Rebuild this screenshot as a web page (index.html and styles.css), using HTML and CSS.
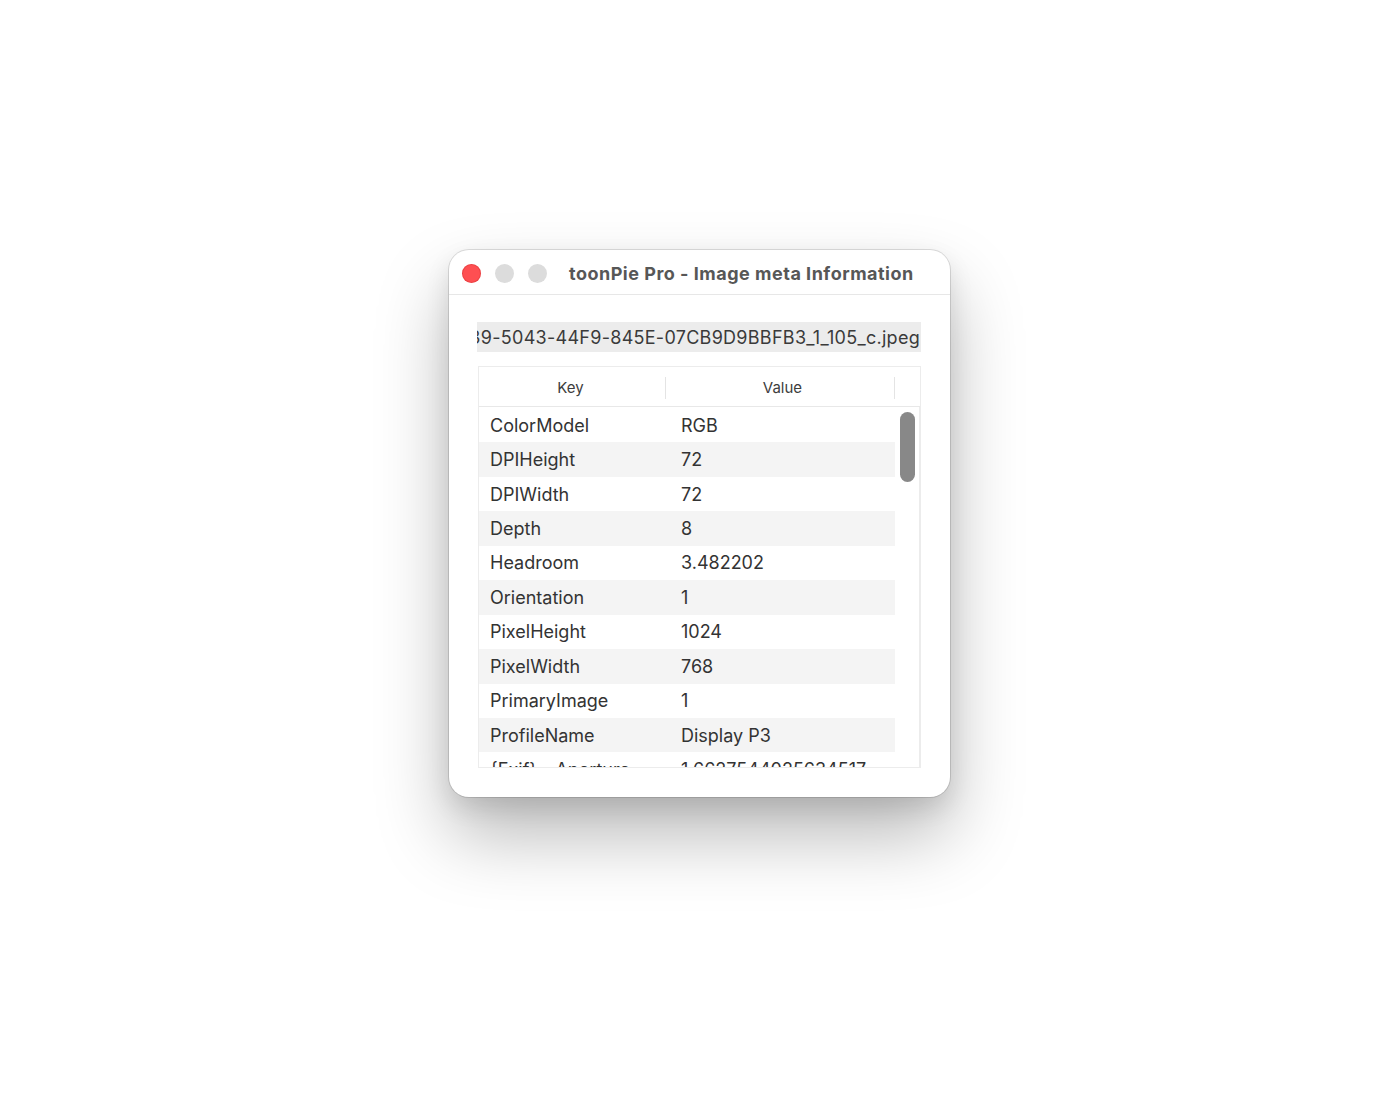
FILE: index.html
```html
<!DOCTYPE html>
<html>
<head>
<meta charset="utf-8">
<link rel="stylesheet" href="styles.css">
</head>
<body>
<div class="stage">
  <div class="window">
    <div class="titlebar">
      <div class="lights">
        <span class="light close"></span>
        <span class="light"></span>
        <span class="light"></span>
      </div>
      <div class="title">toonPie Pro - Image meta Information</div>
    </div>
    <div class="content">
      <div class="filename"><span>4E1A2B39-5043-44F9-845E-07CB9D9BBFB3_1_105_c.jpeg</span></div>
      <div class="table">
        <div class="thead">
          <div class="th key-col">Key</div>
          <div class="th val-col">Value</div>
          <div class="th-end"></div>
        </div>
        <div class="tbody">
          <div class="rows">
            <div class="row"><div class="k">ColorModel</div><div class="v">RGB</div></div>
            <div class="row alt"><div class="k">DPIHeight</div><div class="v">72</div></div>
            <div class="row"><div class="k">DPIWidth</div><div class="v">72</div></div>
            <div class="row alt"><div class="k">Depth</div><div class="v">8</div></div>
            <div class="row"><div class="k">Headroom</div><div class="v">3.482202</div></div>
            <div class="row alt"><div class="k">Orientation</div><div class="v">1</div></div>
            <div class="row"><div class="k">PixelHeight</div><div class="v">1024</div></div>
            <div class="row alt"><div class="k">PixelWidth</div><div class="v">768</div></div>
            <div class="row"><div class="k">PrimaryImage</div><div class="v">1</div></div>
            <div class="row alt"><div class="k">ProfileName</div><div class="v">Display P3</div></div>
            <div class="row"><div class="k">{Exif} - ApertureValue</div><div class="v">1.6627544025634517</div></div>
          </div>
          <div class="scrollbar"><div class="thumb"></div></div>
        </div>
      </div>
    </div>
  </div>
</div>
</body>
</html>
```

FILE: styles.css
```css
html, body {
  margin: 0;
  padding: 0;
  background: #ffffff;
}
body {
  font-family: Inter, "Open Sans", "Liberation Sans", sans-serif;
  color: #333;
}
.stage {
  width: 1400px;
  height: 1100px;
  display: flex;
  justify-content: center;
  padding-top: 250px;
  box-sizing: border-box;
}
.window {
  width: 501px;
  height: 547px;
  margin-left: -1px;
  background: #fff;
  border-radius: 20px;
  box-shadow: 0 0 0 1px rgba(0,0,0,0.12), 0 38px 72px rgba(0,0,0,0.28), 0 10px 24px rgba(0,0,0,0.10);
  display: flex;
  flex-direction: column;
  overflow: hidden;
}
.titlebar {
  height: 45px;
  flex: none;
  border-bottom: 1px solid #e7e7e7;
  display: flex;
  align-items: center;
  box-sizing: border-box;
  padding-top: 3px;
}
.lights {
  display: flex;
  gap: 14px;
  padding-left: 13px;
  margin-top: -1px;
}
.light {
  width: 19px;
  height: 19px;
  border-radius: 50%;
  background: #dcdcdc;
  display: block;
}
.light.close {
  background: #fe4f52;
  box-shadow: inset 0 0 0 1px rgba(200,40,40,0.35);
}
.title {
  margin-left: 22px;
  font-size: 18px;
  font-weight: 700;
  color: #575757;
  letter-spacing: 0.5px;
  white-space: nowrap;
}
.content {
  flex: 1;
  min-height: 0;
  padding: 27px 29px 29px 28px;
  display: flex;
  flex-direction: column;
}
.filename {
  height: 30px;
  flex: none;
  background: #ececec;
  display: flex;
  justify-content: flex-end;
  align-items: center;
  overflow: hidden;
  white-space: nowrap;
  font-size: 18px;
  letter-spacing: 0.28px;
  color: #3a3a3a;
  padding-right: 1px;
}
.filename span {
  flex: none;
}
.table {
  margin-top: 14px;
  margin-left: 1px;
  flex: 1;
  min-height: 0;
  border: 1px solid #ececec;
  display: flex;
  flex-direction: column;
  overflow: hidden;
}
.thead {
  height: 40px;
  flex: none;
  display: flex;
  border-bottom: 1px solid #e8e8e8;
  font-size: 15px;
  color: #3d3d3d;
  box-sizing: border-box;
  padding-top: 2px;
}
.th {
  display: flex;
  align-items: center;
  justify-content: center;
  position: relative;
}
.key-col {
  width: 187px;
  padding-right: 4px;
  box-sizing: border-box;
}
.val-col {
  width: 229px;
  padding-left: 4px;
  box-sizing: border-box;
}
.th::after {
  content: "";
  position: absolute;
  right: 0;
  top: 8px;
  bottom: 7px;
  width: 1px;
  background: #e4e4e4;
}
.th-end {
  flex: 1;
}
.tbody {
  flex: 1;
  min-height: 0;
  display: flex;
  overflow: hidden;
}
.rows {
  width: 416px;
  flex: none;
  padding-top: 1px;
}
.row {
  height: 34.45px;
  display: flex;
  align-items: center;
  font-size: 18px;
  color: #333;
  white-space: nowrap;
}
.row.alt {
  background: #f4f4f4;
}
.k {
  width: 164px;
  margin-right: 11px;
  padding-left: 11px;
  overflow: hidden;
  text-overflow: ellipsis;
}
.v {
  padding-left: 16px;
}
.scrollbar {
  flex: 1;
  border-right: 1px solid #ececec;
  padding: 5px 4px 4px 4px;
  display: flex;
  flex-direction: column;
}
.thumb {
  width: 15px;
  height: 70px;
  border-radius: 8px;
  background: #888888;
  margin-left: 1px;
}
```
